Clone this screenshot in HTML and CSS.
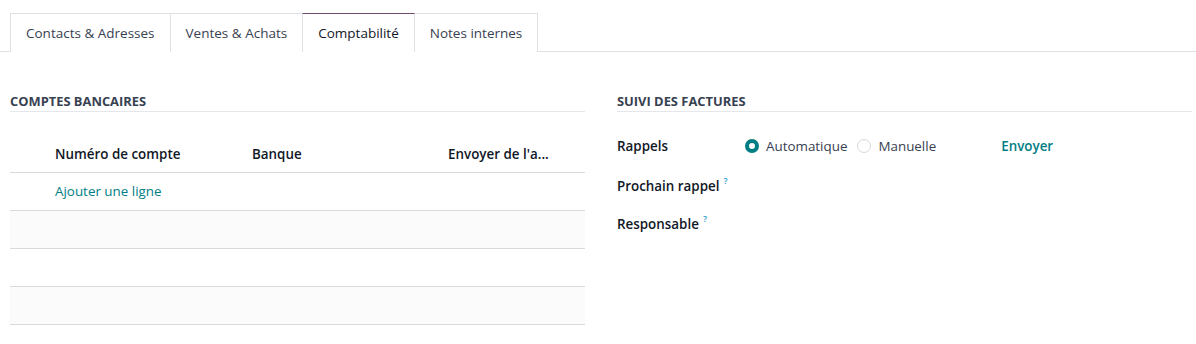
FILE: index.html
```html
<!DOCTYPE html>
<html lang="fr">
<head>
<meta charset="utf-8">
<title>Contact - Comptabilité</title>
<link rel="stylesheet" href="styles.css">
</head>
<body>
<nav class="tabs">
  <a class="tab">Contacts &amp; Adresses</a>
  <a class="tab">Ventes &amp; Achats</a>
  <a class="tab active">Comptabilité</a>
  <a class="tab">Notes internes</a>
</nav>
<main class="sheet">
  <section class="group">
    <h2 class="group-title">Comptes bancaires</h2>
    <table class="list">
      <colgroup>
        <col class="c-handle"><col class="c-num"><col class="c-bank"><col class="c-send"><col class="c-del">
      </colgroup>
      <thead>
        <tr><th></th><th>Numéro de compte</th><th>Banque</th><th title="Envoyer de l'argent">Envoyer de l'a...</th><th></th></tr>
      </thead>
      <tbody>
        <tr><td></td><td colspan="4"><a class="add-line">Ajouter une ligne</a></td></tr>
        <tr class="odd"><td colspan="5"></td></tr>
        <tr><td colspan="5"></td></tr>
        <tr class="odd"><td colspan="5"></td></tr>
      </tbody>
    </table>
  </section>
  <section class="group">
    <h2 class="group-title">Suivi des factures</h2>
    <div class="fields">
      <div class="field first">
        <span class="label">Rappels</span>
        <div class="value">
          <label class="radio"><span class="dot checked"></span>Automatique</label>
          <label class="radio"><span class="dot"></span>Manuelle</label>
          <a class="btn-link">Envoyer</a>
        </div>
      </div>
      <div class="field">
        <span class="label">Prochain rappel<sup class="help">?</sup></span>
        <div class="value"></div>
      </div>
      <div class="field">
        <span class="label">Responsable<sup class="help">?</sup></span>
        <div class="value"></div>
      </div>
    </div>
  </section>
</main>
</body>
</html>
```

FILE: styles.css
```css
* { box-sizing: border-box; }
html, body {
  margin: 0;
  background: #fff;
  font-family: "Open Sans", "Noto Sans", sans-serif;
  font-size: 13.4px;
  color: #111827;
}
body { padding-top: 13px; }

.tabs {
  display: flex;
  padding-left: 10px;
  border-bottom: 1px solid #dee2e6;
  height: 39px;
}
.tab {
  display: flex;
  align-items: center;
  height: 39px;
  padding: 0 15px;
  border: 1px solid #dee2e6;
  border-bottom: none;
  margin-right: -1px;
  color: #374151;
  font-size: 13.5px;
  background: #fff;
}
.tab.active {
  border-top-color: #714b67;
  color: #111827;
  margin-bottom: -1px;
  position: relative;
  z-index: 1;
}

.sheet {
  display: grid;
  grid-template-columns: 575px 575px;
  column-gap: 32px;
  padding: 40px 4px 0 10px;
}
.group-title {
  margin: 0;
  font-size: 12.9px;
  font-weight: 700;
  text-transform: uppercase;
  color: #374151;
  line-height: 19px;
  border-bottom: 1px solid #e5e7eb;
}

.list {
  width: 100%;
  margin-top: 22px;
  border-collapse: collapse;
  table-layout: fixed;
}
.c-handle { width: 37px; }
.c-num { width: 197px; }
.c-bank { width: 196px; }
.c-send { width: 113px; }
.c-del { width: 32px; }
.list th, .list td {
  height: 38px;
  padding: 0 8px;
  border-bottom: 1px solid #d8dadd;
  text-align: left;
  vertical-align: middle;
  white-space: nowrap;
}
.list th {
  font-weight: 600;
  color: #111827;
  padding-top: 2px;
}
.list tr.odd td { background: #fbfbfb; }
.add-line { color: #017e84; }

.fields {
  display: flex;
  flex-direction: column;
  margin-top: 13px;
}
.field {
  display: flex;
  align-items: center;
  height: 38px;
}
.field.first { height: 42px; }
.label {
  width: 128px;
  font-weight: 600;
  color: #111827;
}
.help {
  color: #2b9fcf;
  font-weight: 600;
  font-size: 9px;
  margin-left: 4px;
  vertical-align: 7px;
  line-height: 0;
}
.value {
  display: flex;
  align-items: center;
}
.radio {
  display: flex;
  align-items: center;
  gap: 7px;
  margin-right: 10px;
  color: #374151;
}
.dot {
  width: 14px;
  height: 14px;
  border-radius: 50%;
  border: 1px solid #d5d8dc;
  background: #fff;
}
.dot.checked {
  border: 4.5px solid #017e84;
  background: #fff;
}
.btn-link {
  margin-left: 55px;
  color: #017e84;
  font-weight: 600;
}
```
